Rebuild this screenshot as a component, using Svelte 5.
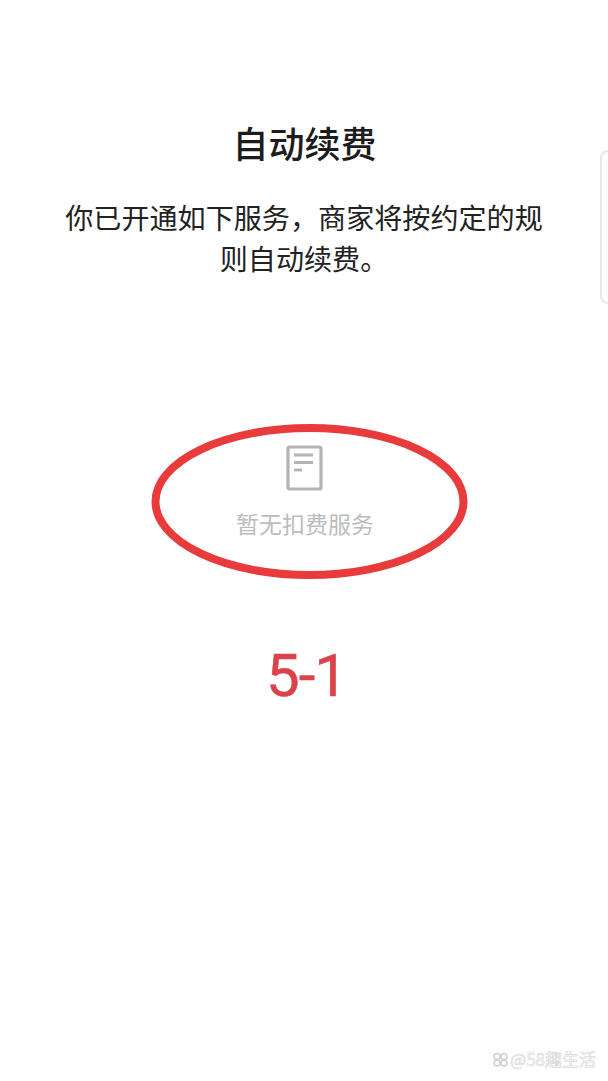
<script>
	const title = '自动续费';
	const desc = '你已开通如下服务，商家将按约定的规则自动续费。';
</script>

<div class="page">
	<h1 class="title">{title}</h1>
	<p class="desc">{desc}</p>

	<div class="empty">
		<svg class="doc" width="38" height="46" viewBox="0 0 38 46" fill="none">
			<rect x="2" y="2" width="33" height="42" rx="1.5" stroke="#b4b4b4" stroke-width="3.2" />
			<path d="M8 10H27M8 17.500H27" stroke="#b4b4b4" stroke-width="2.8" />
			<path d="M8 25H16" stroke="#b4b4b4" stroke-width="2.8" />
		</svg>
		<span class="empty-text">暂无扣费服务</span>
		<svg class="ring" width="320" height="164" viewBox="0 0 320 164" fill="none">
			<ellipse cx="158.500" cy="79.500" rx="154" ry="73.500" stroke="#e93a3c" stroke-width="8" />
		</svg>
	</div>

	<div class="step">5-1</div>

	<div class="edge"></div>
	<div class="mark">
		<svg width="17" height="17" viewBox="0 0 17 16" fill="none">
			<circle cx="5" cy="5" r="3" stroke="#cfcfcf" stroke-width="1.500" />
			<circle cx="12" cy="5" r="3" stroke="#cfcfcf" stroke-width="1.500" />
			<circle cx="5" cy="11.500" r="3" stroke="#cfcfcf" stroke-width="1.500" />
			<circle cx="12" cy="11.500" r="3" stroke="#cfcfcf" stroke-width="1.500" />
		</svg>
		<span>@58趣生活</span>
	</div>
</div>

<style>
	:global(body) {
		margin: 0;
		background: #fff;
	}

	.page {
		position: relative;
		box-sizing: border-box;
		width: 608px;
		height: 1081px;
		overflow: hidden;
		display: flex;
		flex-direction: column;
		align-items: center;
		padding-top: 118px;
		font-family: "Noto Sans CJK SC", "Noto Sans", sans-serif;
		background: #fff;
	}

	.title {
		margin: 0;
		font-size: 36px;
		line-height: 48px;
		font-weight: 500;
		color: #1c1c1c;
		margin-left: 1px;
	}

	.desc {
		width: 486px;
		margin: 30px 0 0;
		font-size: 28.100px;
		line-height: 41px;
		font-weight: 400;
		color: #222;
		text-align: center;
	}

	.empty {
		position: relative;
		display: flex;
		flex-direction: column;
		align-items: center;
		margin-top: 167px;
	}

	.doc {
		display: block;
		margin-left: 2px;
	}

	.empty-text {
		margin-top: 15px;
		font-size: 23px;
		line-height: 34px;
		color: #bcbcbc;
		margin-left: 2px;
	}

	.ring {
		position: absolute;
		left: -83px;
		top: -23px;
	}

	.step {
		margin-top: 98px;
		font-family: Roboto, "Liberation Sans", sans-serif;
		font-size: 60px;
		line-height: 76px;
		color: #d9444a;
		-webkit-text-stroke: 0.5px #d9444a;
		letter-spacing: -1px;
		margin-left: 5px;
	}

	.edge {
		position: absolute;
		right: -10px;
		top: 150px;
		width: 14px;
		height: 150px;
		border: 2px solid #e8e8e8;
		border-radius: 8px;
		background: #fff;
	}

	.mark {
		position: absolute;
		right: 12px;
		bottom: 12px;
		display: flex;
		align-items: center;
		gap: 1px;
		font-size: 17px;
		line-height: 20px;
		color: #fff;
		-webkit-text-stroke: 0.5px #cdcdcd;
	}
</style>
